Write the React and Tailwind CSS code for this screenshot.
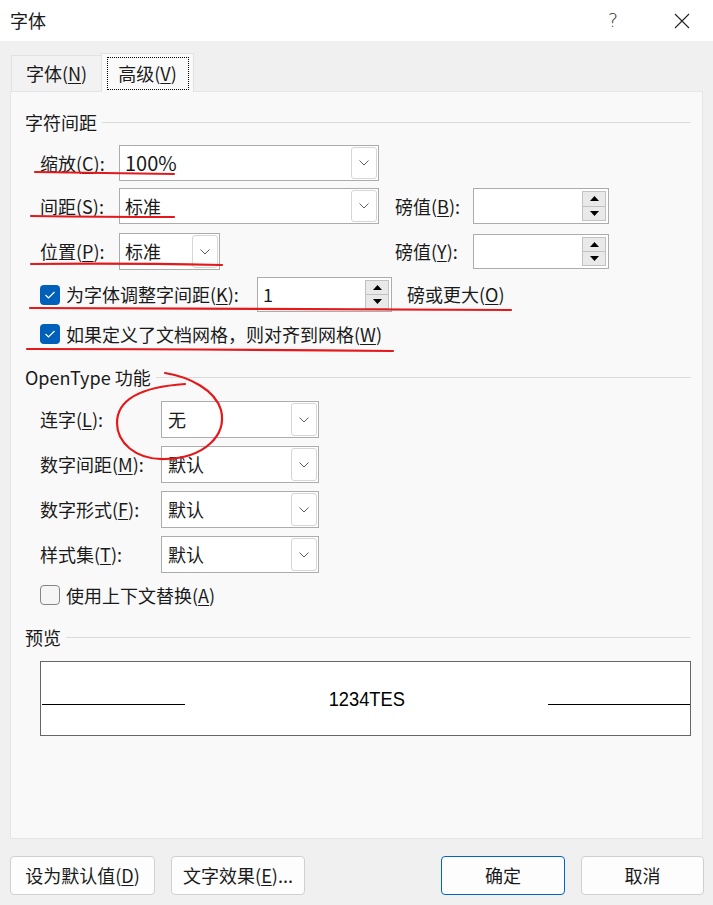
import React from 'react';

const Acc = ({ pre, k, post = '' }) => (
  <span>
    {pre}(<u className="underline-offset-2">{k}</u>){post}
  </span>
);

const Chevron = () => (
  <svg width="10" height="6" viewBox="0 0 10 6">
    <polyline points="0.5,0.5 5,5 9.5,0.5" fill="none" stroke="#5c5c5c" strokeWidth="1" />
  </svg>
);

const Combo = ({ className, value, pad = 'pl-[4px]' }) => (
  <div className={`flex h-full border border-[#acacac] bg-white p-[1px] ${className}`}>
    <div className={`flex-1 flex items-center ${pad}`}>{value}</div>
    <div className="w-[26px] border border-[#d6d6d6] rounded-[3px] bg-white flex items-center justify-center">
      <Chevron />
    </div>
  </div>
);

const Tri = ({ up }) => (
  <svg width="9" height="5" viewBox="0 0 9 5">
    <polygon points={up ? '0,5 4.5,0 9,5' : '0,0 4.5,5 9,0'} fill="#000" />
  </svg>
);

const Spin = ({ className, value }) => (
  <div className={`flex h-full border border-[#acacac] bg-white ${className}`}>
    <div className="flex-1 flex items-center pl-[5px]">{value}</div>
    <div className="w-[24px] flex flex-col py-[2px] mr-[2px]">
      <div className="flex-1 border border-[#c2c2c2] bg-[#e9e9e9] flex items-center justify-center">
        <Tri up />
      </div>
      <div className="flex-1 border border-[#c2c2c2] border-t-0 bg-[#e9e9e9] flex items-center justify-center">
        <Tri />
      </div>
    </div>
  </div>
);

const Check = ({ on }) =>
  on ? (
    <div className="w-[20px] h-[20px] rounded-[4px] bg-[#005fb8] flex items-center justify-center shrink-0">
      <svg width="12" height="10" viewBox="0 0 12 10">
        <polyline points="1.5,5 4.5,8 10.5,2" fill="none" stroke="#fff" strokeWidth="1.2" />
      </svg>
    </div>
  ) : (
    <div className="w-[20px] h-[20px] rounded-[4px] border border-[#858585] bg-[#f5f5f5] shrink-0" />
  );

const Group = ({ title, className }) => (
  <div className={`flex items-center h-[20px] ml-[14px] mr-[11px] ${className}`}>
    <span className="whitespace-nowrap">{title}</span>
    <div className="flex-1 h-px bg-[#dcdcdc] ml-[5px]" />
  </div>
);

const OtRow = ({ label, value, className }) => (
  <div className={`flex items-center h-[37px] pl-[29px] ${className}`}>
    <div className="w-[121px] whitespace-nowrap">{label}</div>
    <Combo className="w-[158px]" value={value} pad="pl-[5px]" />
  </div>
);

const Btn = ({ children, className }) => (
  <div className={`h-[39px] rounded-[4px] border bg-[#fdfdfd] flex items-center justify-center ${className}`}>
    {children}
  </div>
);

export default function App() {
  return (
    <div className="relative w-[713px] h-[905px] overflow-hidden bg-[#f0f0f0] text-[18px] text-[#1a1a1a] font-['Noto_Sans_CJK_SC',sans-serif]">
      {/* title bar */}
      <div className="h-[41px] bg-white flex items-center pl-[10px]">
        <span>字体</span>
        <div className="ml-auto flex items-center pr-[23px]">
          <span className="text-[19px] text-[#333] font-['DejaVu_Sans',sans-serif] font-light">?</span>
          <svg className="ml-[56px]" width="16" height="16" viewBox="0 0 16 16">
            <path d="M1 1 L15 15 M15 1 L1 15" stroke="#222" strokeWidth="1.1" />
          </svg>
        </div>
      </div>

      {/* tabs */}
      <div className="flex items-end h-[50px] pl-[11px]">
        <div className="w-[90px] h-[36px] border border-b-0 border-r-0 border-[#e2e2e2] bg-[#f2f2f2] flex items-center justify-center">
          <Acc pre="字体" k="N" />
        </div>
        <div className="relative z-10 w-[93px] h-[39px] -mb-px border border-b-0 border-[#e2e2e2] bg-[#f9f9f9] flex items-center justify-center">
          <div className="w-[82px] h-[33px] border border-dotted border-black flex items-center justify-center">
            <Acc pre="高级" k="V" />
          </div>
        </div>
      </div>

      {/* panel */}
      <div className="ml-[10px] w-[693px] h-[748px] border border-[#e5e5e5] bg-[#f9f9f9] flex flex-col">
        <Group title="字符间距" className="mt-[20px]" />

        <div className="flex items-center h-[36px] mt-[13px] pl-[29px]">
          <div className="w-[79px] whitespace-nowrap"><Acc pre="缩放" k="C" post=":" /></div>
          <Combo className="w-[260px]" value={<span className="text-[20px]">100%</span>} />
        </div>

        <div className="flex items-center h-[36px] mt-[7px] pl-[29px]">
          <div className="w-[79px] whitespace-nowrap"><Acc pre="间距" k="S" post=":" /></div>
          <Combo className="w-[260px]" value="标准" />
          <div className="w-[78px] ml-[16px] whitespace-nowrap"><Acc pre="磅值" k="B" post=":" /></div>
          <Spin className="w-[136px]" value="" />
        </div>

        <div className="flex items-center h-[37px] mt-[9px] pl-[29px]">
          <div className="w-[79px] whitespace-nowrap"><Acc pre="位置" k="P" post=":" /></div>
          <div className="w-[260px] h-full">
            <Combo className="w-[101px]" value="标准" />
          </div>
          <div className="w-[78px] ml-[16px] h-[35px] flex items-center whitespace-nowrap"><Acc pre="磅值" k="Y" post=":" /></div>
          <div className="h-[35px]">
            <Spin className="w-[136px]" value="" />
          </div>
        </div>

        <div className="flex items-center h-[35px] mt-[7px] pl-[29px]">
          <Check on />
          <div className="w-[191px] ml-[6px] whitespace-nowrap"><Acc pre="为字体调整字间距" k="K" post=":" /></div>
          <Spin className="w-[135px]" value="1" />
          <div className="ml-[15px] whitespace-nowrap"><Acc pre="磅或更大" k="O" /></div>
        </div>

        <div className="flex items-center h-[30px] mt-[7px] pl-[29px]">
          <Check on />
          <div className="ml-[6px] whitespace-nowrap"><Acc pre="如果定义了文档网格，则对齐到网格" k="W" /></div>
        </div>

        <Group title="OpenType 功能" className="mt-[18px]" />

        <OtRow label={<Acc pre="连字" k="L" post=":" />} value="无" className="mt-[14px]" />
        <OtRow label={<Acc pre="数字间距" k="M" post=":" />} value="默认" className="mt-[8px]" />
        <OtRow label={<Acc pre="数字形式" k="F" post=":" />} value="默认" className="mt-[8px]" />
        <OtRow label={<Acc pre="样式集" k="T" post=":" />} value="默认" className="mt-[8px]" />

        <div className="flex items-center h-[30px] mt-[7px] pl-[29px]">
          <Check />
          <div className="ml-[6px] whitespace-nowrap"><Acc pre="使用上下文替换" k="A" /></div>
        </div>

        <Group title="预览" className="mt-[17px]" />

        <div className="mt-[14px] ml-[29px] mr-[11px] h-[75px] border border-[#666] bg-white flex items-center">
          <div className="w-[143px] h-px bg-black mt-[12px] ml-[1px]" />
          <div className="flex-1 flex justify-center">
            <span className="inline-block text-[21px] text-black font-['Liberation_Sans',sans-serif] scale-x-[0.87]">1234TES</span>
          </div>
          <div className="w-[142px] h-px bg-black mt-[12px]" />
        </div>
      </div>

      {/* buttons */}
      <div className="flex items-center mt-[17px] pl-[10px]">
        <Btn className="w-[145px] border-[#d0d0d0]"><Acc pre="设为默认值" k="D" /></Btn>
        <Btn className="w-[134px] ml-[16px] border-[#d0d0d0]"><Acc pre="文字效果" k="E" post="..." /></Btn>
        <Btn className="w-[124px] ml-[136px] border-[#0067c0]">确定</Btn>
        <Btn className="w-[123px] ml-[16px] border-[#d0d0d0]">取消</Btn>
      </div>

      {/* red ink annotations */}
      <svg className="absolute inset-0 pointer-events-none" width="713" height="905" viewBox="0 0 713 905">
        <g fill="none" stroke="#e3191c" strokeWidth="2.2" strokeLinecap="round">
          <path d="M35 172 Q100 173 174 174" />
          <path d="M31 216 Q100 217 174 217" />
          <path d="M31 264 Q120 263 222 265" />
          <path d="M30 308 Q260 308 511 310" />
          <path d="M27 349 Q200 349 393 351" />
          <path d="M165 373 C190 377 215 390 221 410 C227 435 205 458 165 459 C135 460 117 442 117 423 C117 400 140 387 185 384" />
        </g>
      </svg>
    </div>
  );
}
